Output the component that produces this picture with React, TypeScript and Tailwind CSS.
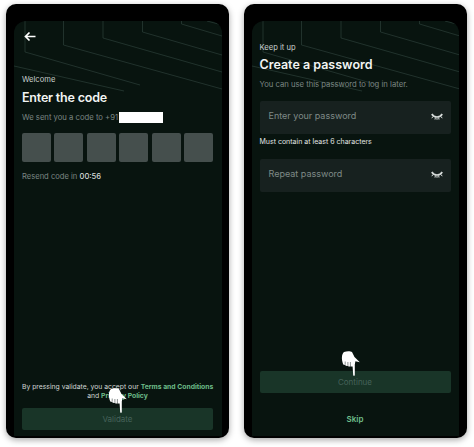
const font = { fontFamily: '"Inter", "Liberation Sans", sans-serif' };

function Lines() {
  const segs = [
    "M11 0V31L126 64",
    "M0 45L110 70",
    "M49.5 0V24L208 68",
    "M89 0V17L208 51",
    "M128.5 0V11L208 34",
    "M167.5 0V3L208 15",
    "M193 0L208 4",
  ];
  return (
    <svg className="absolute left-0 top-0 w-[208px] h-[110px]" viewBox="0 0 208 110" fill="none">
      {segs.map((d, i) => (
        <path key={i} d={d} stroke="#2c3f39" strokeWidth="0.7" />
      ))}
    </svg>
  );
}

function Hand() {
  return (
    <svg viewBox="0 0 19 25" className="w-[19px] h-[25px]">
      <path
        d="M3 1C5.5 0 9.5 0 11 1L13.5 6L18.8 11.2L14.4 10.2L13.8 13.5L13.8 24.2C13.5 25 12.4 25 12.2 24.2L11.6 15.5L9.9 15.6L9.4 14.4V15.4L7.4 15.4L6.9 13.8V15L4.6 14.8L4.2 13.2V14L2.2 13.4C1.2 10.5 0.6 8 1 5C1.4 3.2 2 2 3 1Z"
        fill="#ffffff"
      />
      <path d="M4.2 10.5V13.5M6.9 11V14.5M9.4 11V15" stroke="#3a4744" strokeWidth="0.6" fill="none" />
    </svg>
  );
}

function EyeClosed() {
  return (
    <svg viewBox="0 0 12 8" className="w-[12px] h-[8px]" fill="none" stroke="#d5dad8">
      <path d="M0.8 1C3 5 9 5 11.2 1" strokeWidth="1.6" />
      <path d="M2 3.5L0.8 5.2M4.4 4.6L4 6.6M7.6 4.6L8 6.6M10 3.5L11.2 5.2M6 4.8V6.8" strokeWidth="1" />
    </svg>
  );
}

function Phone({ children }: { children: React.ReactNode }) {
  return (
    <div className="w-[223px] h-[434px] bg-black rounded-[10px] pt-[17px] px-[8px] shadow-[0_2px_6px_rgba(0,0,0,0.35)] shrink-0">
      <div className="relative h-[415px] w-[207.5px] rounded-t-[12px] overflow-hidden bg-[#08140f] flex flex-col pl-[8px] pr-[8.5px]">
        <Lines />
        {children}
      </div>
    </div>
  );
}

function Field({ label }: { label: string }) {
  return (
    <div className="h-[33px] rounded-[2px] bg-[#17211f] flex items-center justify-between pl-[9px] pr-[8px]">
      <span className="text-[9px] text-[#7f8a87] relative top-[-1px]">{label}</span>
      <EyeClosed />
    </div>
  );
}

export default function App() {
  return (
    <div className="w-[474px] h-[447px] bg-white pl-[6px] pt-[4px] flex gap-[14.5px] overflow-hidden antialiased" style={font}>
      <Phone>
        <div className="relative flex flex-col flex-1">
          <svg viewBox="0 0 12 10" className="w-[12px] h-[11px] ml-[1.5px] mt-[10px]" fill="none" stroke="#ffffff" strokeWidth="1.7">
            <path d="M11.5 5H1.5M5.5 1L1.5 5L5.5 9" />
          </svg>
          <p className="mt-[33px] text-[7.6px] leading-[10px] text-[#c9cfcd]">Welcome</p>
          <h1 className="mt-[5px] text-[12.5px] tracking-[-0.2px] leading-[16px] font-semibold text-[#f2f4f3]">Enter the code</h1>
          <div className="mt-[6px] flex items-center h-[11px]">
            <span className="text-[7.7px] whitespace-nowrap text-[#7b8683] w-[96.5px]">We sent you a code to +91</span>
            <div className="w-[44px] h-[10.5px] bg-white" />
          </div>
          <div className="mt-[10px] grid grid-cols-6 gap-[3.4px]">
            {[0, 1, 2, 3, 4, 5].map((i) => (
              <div key={i} className="h-[29px] rounded-[2px] bg-[#454f4d]" />
            ))}
          </div>
          <p className="mt-[10px] text-[7.6px] leading-[10px] text-[#7b8683]">
            Resend code in <span className="text-[#d5dad8] font-medium">00:56</span>
          </p>
          <div className="mt-auto text-center text-[6.8px] leading-[9px] text-[#d5dad8] whitespace-nowrap opacity-[0.99]">
            <p>
              By pressing validate, you accept our <span className="font-bold text-[#6fbf8b]">Terms and Conditions</span>
            </p>
            <p>
              and <span className="font-bold text-[#6fbf8b]">Privacy Policy</span>
            </p>
          </div>
          <div className="mt-[8px] mb-[6.5px] h-[22px] rounded-[2px] bg-[#193528] flex items-center justify-center text-[8px] text-[#46625a]">
            Validate
          </div>
          <div className="absolute left-[86px] top-[367px]">
            <Hand />
          </div>
        </div>
      </Phone>
      <Phone>
        <div className="relative flex flex-col flex-1">
          <p className="mt-[22px] text-[7.6px] leading-[10px] text-[#c9cfcd]">Keep it up</p>
          <h1 className="mt-[4px] text-[12.5px] leading-[16px] font-semibold text-[#f2f4f3]">Create a password</h1>
          <p className="mt-[6px] text-[7.7px] leading-[11px] text-[#7b8683]">You can use this password to log in later.</p>
          <div className="mt-[10.5px]">
            <Field label="Enter your password" />
          </div>
          <p className="mt-[3px] text-[7px] leading-[9px] text-[#e5e8e7] opacity-[0.99]">Must contain at least 6 characters</p>
          <div className="mt-[13px]">
            <Field label="Repeat password" />
          </div>
          <div className="mt-auto h-[22px] rounded-[2px] bg-[#193528] flex items-center justify-center text-[8px] text-[#46625a]">
            Continue
          </div>
          <p className="mt-[20px] mb-[11px] text-center text-[8px] leading-[12px] font-semibold text-[#6fbf8b]">Skip</p>
          <div className="absolute left-[81px] top-[330px]">
            <Hand />
          </div>
        </div>
      </Phone>
    </div>
  );
}
